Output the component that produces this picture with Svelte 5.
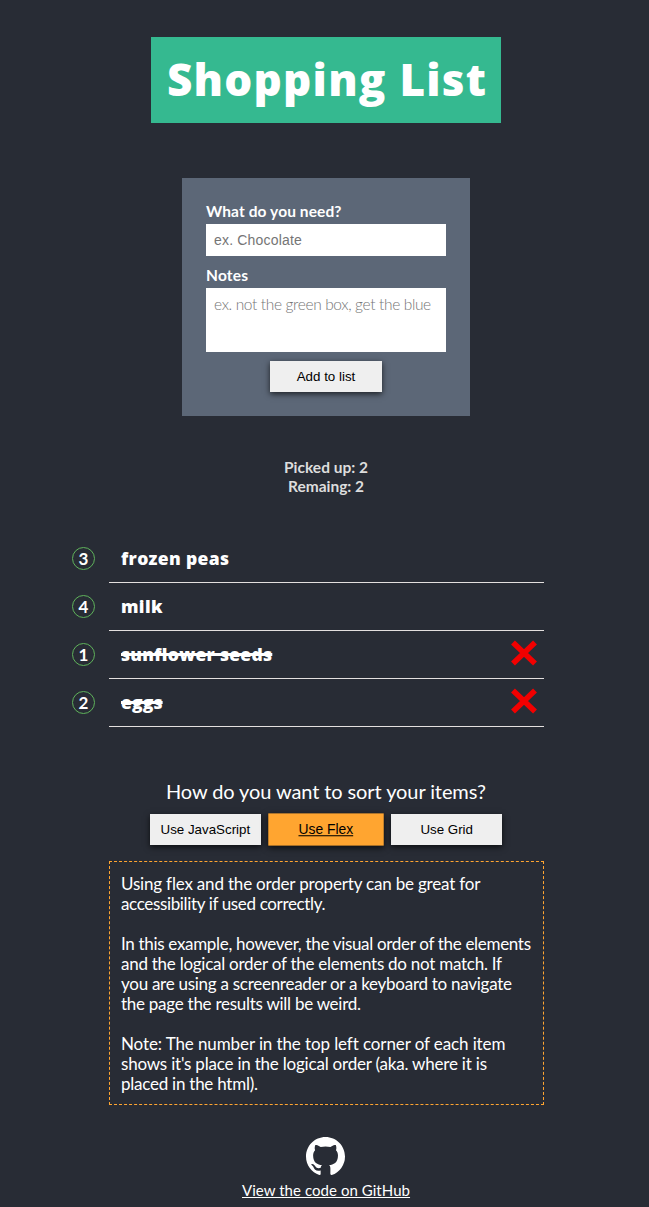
<script>
  const items = [
    { place: 3, name: 'frozen peas', width: 108, picked: false },
    { place: 4, name: 'milk', width: 41.5, picked: false },
    { place: 1, name: 'sunflower seeds', width: 151, picked: true },
    { place: 2, name: 'eggs', width: 41.5, picked: true }
  ];

  const paragraphs = [
    [
      ['Using flex and the order property can be great for', 359.5],
      ['accessibility if used correctly.', 204.5]
    ],
    [
      ['In this example, however, the visual order of the elements', 410],
      ['and the logical order of the elements do not match. If', 381],
      ['you are using a screenreader or a keyboard to navigate', 391],
      ['the page the results will be weird.', 240]
    ],
    [
      ['Note: The number in the top left corner of each item', 384],
      ["shows it's place in the logical order (aka. where it is", 366],
      ['placed in the html).', 137]
    ]
  ];

  // Tracks a single line of text so that it spans the given width.
  function fit(node, width) {
    const natural = node.getBoundingClientRect().width;
    const count = node.textContent.length;
    const spacing = (width - natural) / (count - 1);
    node.style.letterSpacing = `${spacing}px`;
    node.style.marginRight = `${-spacing}px`;
  }
</script>

<div class="page">
  <h1><span use:fit={319}>Shopping List</span></h1>

  <form onsubmit={(e) => e.preventDefault()}>
    <label for="need"><span use:fit={135.5}>What do you need?</span></label>
    <input id="need" type="text" placeholder="ex. Chocolate" />
    <label for="notes"><span use:fit={42}>Notes</span></label>
    <textarea id="notes" placeholder="ex. not the green box, get the blue"></textarea>
    <button class="btn">Add to list</button>
  </form>

  <div class="counts">
    <div><span use:fit={84}>Picked up: 2</span></div>
    <div><span use:fit={76}>Remaing: 2</span></div>
  </div>

  <ul>
    {#each items as item}
      <li class:picked={item.picked}>
        <span class="place">{item.place}</span>
        <span class="name" use:fit={item.width}>{item.name}</span>
        {#if item.picked}
          <svg class="remove" viewBox="0 0 26 26" width="26" height="26">
            <path d="M2 2.5 24 23.5M24 2.5 2 23.5" stroke="#f20000" stroke-width="5.6" />
          </svg>
        {/if}
      </li>
    {/each}
  </ul>

  <h2><span use:fit={320}>How do you want to sort your items?</span></h2>
  <div class="sorts">
    <button class="btn">Use JavaScript</button>
    <button class="btn active">Use Flex</button>
    <button class="btn">Use Grid</button>
  </div>

  <section>
    {#each paragraphs as lines}
      <p>
        {#each lines as [text, width]}
          <span class="line"><span use:fit={width}>{text}</span></span>
        {/each}
      </p>
    {/each}
  </section>

  <footer>
    <svg viewBox="0 0 16 16" width="39" height="39" fill="#fff">
      <path d="M8 0C3.58 0 0 3.58 0 8c0 3.54 2.29 6.53 5.47 7.59.4.07.55-.17.55-.38 0-.19-.01-.82-.01-1.49-2.01.37-2.53-.49-2.69-.94-.09-.23-.48-.94-.82-1.13-.28-.15-.68-.52-.01-.53.63-.01 1.08.58 1.23.82.72 1.21 1.87.87 2.33.66.07-.52.28-.87.51-1.07-1.78-.2-3.64-.89-3.64-3.95 0-.87.31-1.59.82-2.15-.08-.2-.36-1.02.08-2.12 0 0 .67-.21 2.2.82.64-.18 1.32-.27 2-.27s1.36.09 2 .27c1.53-1.04 2.2-.82 2.2-.82.44 1.1.16 1.92.08 2.12.51.56.82 1.27.82 2.15 0 3.07-1.87 3.75-3.65 3.95.29.25.54.73.54 1.48 0 1.07-.01 1.93-.01 2.2 0 .21.15.46.55.38A8.01 8.01 0 0 0 16 8c0-4.42-3.58-8-8-8z" />
    </svg>
    <a href="#code"><span use:fit={168}>View the code on GitHub</span></a>
  </footer>
</div>

<style>
  :global(body) {
    background: #282c35;
    overflow: hidden;
  }
  .page,
  .page * {
    box-sizing: border-box;
  }
  .page {
    width: 652px;
    height: 1207px;
    padding-top: 37px;
    display: flex;
    flex-direction: column;
    align-items: center;
    color: #fff;
    font-family: 'Gill Sans', Lato, sans-serif;
    white-space: nowrap;
  }
  h1 {
    margin: 0;
    width: 350px;
    height: 86px;
    padding-left: 16px;
    background: #35b990;
    font-family: 'Gill Sans', 'Open Sans', sans-serif;
    font-size: 44px;
    font-weight: 800;
    line-height: 84px;
  }
  form {
    width: 288px;
    height: 238px;
    margin-top: 55px;
    padding: 24px;
    background: #5c6777;
    display: flex;
    flex-direction: column;
  }
  label {
    height: 22px;
    line-height: 18px;
    font-size: 15.5px;
    font-weight: 700;
  }
  input,
  textarea {
    display: block;
    width: 240px;
    border: 0;
    padding: 8px;
    background: #fff;
    resize: none;
    overflow: hidden;
    outline: none;
  }
  input {
    height: 32px;
    margin-bottom: 10px;
    font: 14px 'Liberation Sans', Arial, sans-serif;
    letter-spacing: 0.18px;
  }
  textarea {
    height: 64px;
    padding-top: 7px;
    font: 300 15.5px/18px 'Gill Sans', Lato, sans-serif;
    letter-spacing: -0.36px;
  }
  input::placeholder,
  textarea::placeholder {
    color: #757575;
  }
  .btn {
    width: 111px;
    height: 31px;
    padding: 0;
    border: 0;
    background: #efefef;
    color: #000;
    font: 13.33px 'Liberation Sans', Arial, sans-serif;
    box-shadow: 0 2px 6px rgba(0, 0, 0, 0.7);
  }
  form .btn {
    width: 112px;
    margin: 9px auto 0;
  }
  .counts {
    margin-top: 42px;
    color: #ddd;
    font-size: 15.5px;
    font-weight: 700;
    line-height: 19px;
    text-align: center;
  }
  ul {
    list-style: none;
    width: 435px;
    margin: 39px 0 0 1px;
    padding: 0;
  }
  li {
    display: flex;
    align-items: center;
    height: 48px;
    padding: 0 7px 0 12px;
    border-bottom: 1px solid #e4e0df;
  }
  .name {
    margin-bottom: 1px;
    font-family: 'Gill Sans', 'Open Sans', sans-serif;
    font-size: 17.5px;
    font-weight: 800;
  }
  .place {
    flex: none;
    width: 23px;
    height: 23px;
    margin-left: -49px;
    margin-right: 26px;
    border: 1px solid #5fb25b;
    border-radius: 50%;
    font-size: 17px;
    font-weight: 700;
    line-height: 22px;
    text-align: center;
  }
  .picked .name {
    text-decoration: line-through;
    text-decoration-thickness: 2.5px;
  }
  .remove {
    margin-left: auto;
    margin-bottom: 4px;
  }
  h2 {
    margin: 53px 0 0;
    height: 25px;
    font-size: 20px;
    font-weight: 400;
    line-height: 23px;
  }
  .sorts {
    display: flex;
    gap: 9px 10px;
    margin-top: 9px;
    width: 352px;
    justify-content: space-between;
  }
  .active {
    transform: translateX(-0.5px) scale(1.04);
    background: #ffa530;
    text-decoration: underline;
  }
  section {
    width: 435px;
    height: 244px;
    margin: 16px 0 0 1px;
    padding: 12px 11px 10px;
    border: 1px dashed #ffa530;
    font-size: 17px;
    line-height: 20px;
  }
  p {
    margin: 0 0 20px;
  }
  .line {
    display: block;
  }
  footer {
    margin-top: 32px;
    display: flex;
    flex-direction: column;
    align-items: center;
  }
  footer svg {
    display: block;
    margin-right: 1px;
  }
  a {
    margin-top: 4px;
    color: #fff;
    font-size: 15px;
    line-height: 20px;
    text-decoration: underline;
  }
</style>
